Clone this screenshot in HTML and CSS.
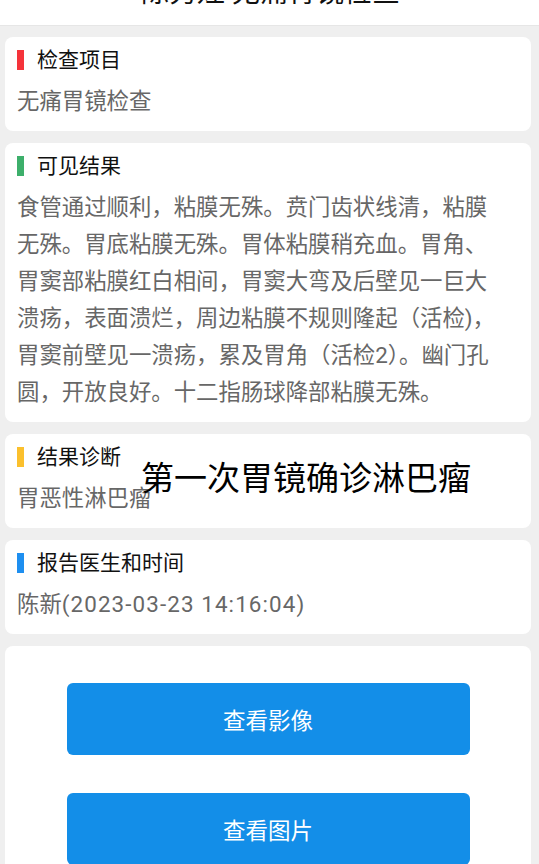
FILE: index.html
```html
<!DOCTYPE html>
<html lang="zh-CN">
<head>
<meta charset="utf-8">
<title>无痛胃镜检查</title>
<link rel="stylesheet" href="styles.css">
</head>
<body>
<header class="topbar">
  <div class="topbar-title">陈秀娃 无痛胃镜检查</div>
</header>
<main class="list">
  <section class="card">
    <div class="card-head"><span class="bar bar-red"></span><span class="card-title">检查项目</span></div>
    <div class="card-value">无痛胃镜检查</div>
  </section>
  <section class="card">
    <div class="card-head"><span class="bar bar-green"></span><span class="card-title">可见结果</span></div>
    <div class="card-value">食管通过顺利，粘膜无殊。贲门齿状线清，粘膜无殊。胃底粘膜无殊。胃体粘膜稍充血。胃角、胃窦部粘膜红白相间，胃窦大弯及后壁见一巨大溃疡，表面溃烂，周边粘膜不规则隆起（活检)，胃窦前壁见一溃疡，累及胃角（活检2）。幽门孔圆，开放良好。十二指肠球降部粘膜无殊。</div>
  </section>
  <section class="card card-annotated">
    <div class="card-head"><span class="bar bar-yellow"></span><span class="card-title">结果诊断</span></div>
    <div class="card-value">胃恶性淋巴瘤</div>
    <div class="annotation">第一次胃镜确诊淋巴瘤</div>
  </section>
  <section class="card">
    <div class="card-head"><span class="bar bar-blue"></span><span class="card-title">报告医生和时间</span></div>
    <div class="card-value">陈新<span class="datetime">(2023-03-23 14:16:04)</span></div>
  </section>
  <section class="card card-actions">
    <button class="btn" type="button">查看影像</button>
    <button class="btn" type="button">查看图片</button>
  </section>
</main>
</body>
</html>
```
FILE: styles.css
```css
html, body {
  margin: 0;
  padding: 0;
}
body {
  background: #efefef;
  font-family: Roboto, "Noto Sans CJK SC", sans-serif;
  color: #111;
  height: 864px;
  overflow: hidden;
}
.topbar {
  height: 25px;
  background: #fff;
  border-bottom: 1px solid #e6e6e6;
  overflow: hidden;
  display: flex;
  justify-content: center;
}
.topbar-title {
  font-size: 28px;
  line-height: 28px;
  margin-top: -21px;
  padding-left: 2px;
  color: #111;
  white-space: nowrap;
}
.list {
  display: flex;
  flex-direction: column;
  gap: 12px;
  padding: 11px 8px 0 5px;
}
.card {
  background: #fff;
  border-radius: 8px;
  padding: 8px 26px 11px 12px;
}
.card-annotated {
  position: relative;
}
.card-head {
  display: flex;
  align-items: center;
  gap: 13px;
  height: 30px;
}
.bar {
  width: 7px;
  height: 20px;
  flex: none;
}
.bar-red { background: #f5333a; }
.bar-green { background: #3daf6b; }
.bar-yellow { background: #fbc02d; }
.bar-blue { background: #1e8ff0; }
.card-title {
  font-size: 21px;
  line-height: 30px;
  color: #111;
}
.card-value {
  margin-top: 8px;
  font-size: 22.4px;
  line-height: 37px;
  color: #676767;
}
.datetime {
  letter-spacing: 1.1px;
}
.annotation {
  position: absolute;
  left: 136px;
  top: 23px;
  font-size: 33px;
  line-height: 44px;
  color: #000;
  white-space: nowrap;
}
.card-actions {
  display: flex;
  flex-direction: column;
  align-items: center;
  gap: 38px;
  padding: 37px 0 40px;
}
.btn {
  width: 403px;
  height: 72px;
  border: none;
  border-radius: 6px;
  background: #138ee8;
  color: #fff;
  font-family: "Noto Sans CJK SC", sans-serif;
  font-size: 22.5px;
  flex: none;
}
```
